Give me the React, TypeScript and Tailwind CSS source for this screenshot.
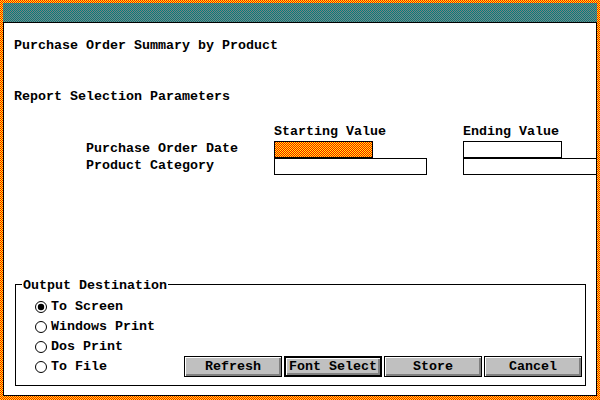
import React from "react";

// 1px checkerboards: 2px tiles of vertical halves blended over horizontal halves with "difference"
const checkerRed =
  "bg-[image:linear-gradient(90deg,#000000_50%,#00ff00_50%),linear-gradient(180deg,#ff0000_50%,#ffff00_50%)] bg-[length:2px_2px] bg-blend-difference";
const checkerTeal =
  "bg-[image:linear-gradient(90deg,#000000_50%,#800000_50%),linear-gradient(180deg,#008080_50%,#808080_50%)] bg-[length:2px_2px] bg-blend-difference";

function Radio({ label, checked }: { label: string; checked?: boolean }) {
  return (
    <div className="flex h-5 items-center gap-[4px]">
      <svg width="12" height="12" viewBox="0 0 12 12" className="shrink-0">
        <circle cx="6" cy="6" r="5.5" fill="#fff" stroke="#000" strokeWidth="1" />
        {checked && <circle cx="6" cy="6" r="3.2" fill="#000" />}
      </svg>
      <span>{label}</span>
    </div>
  );
}

function Button({ label, focused }: { label: string; focused?: boolean }) {
  return (
    <button
      className={`h-[21px] w-[98px] border border-black bg-[#c0c0c0] font-bold leading-[16px] ${
        focused
          ? "shadow-[inset_0_0_0_1px_#000000,inset_2px_2px_0_#ffffff,inset_-3px_-3px_0_#808080]"
          : "shadow-[inset_1px_1px_0_#ffffff,inset_-2px_-2px_0_#808080]"
      }`}
    >
      {label}
    </button>
  );
}

export default function App() {
  return (
    <div
      className={`flex h-[400px] w-[600px] flex-col p-[3px] pb-[4px] font-['Liberation_Mono',monospace] text-[13.34px] font-bold leading-[16px] text-black ${checkerRed}`}
    >
      {/* Title bar */}
      <div className={`h-[20px] shrink-0 border-b border-black ${checkerTeal}`} />

      {/* Body */}
      <div className="flex min-h-0 flex-1 flex-col overflow-hidden border-x border-b border-black bg-white">
        <div className="pl-[10px] pt-[15px]">Purchase Order Summary by Product</div>
        <div className="mt-[35px] pl-[10px]">Report Selection Parameters</div>

        {/* Selection grid */}
        <div className="mt-[19px] pl-[82px]">
          <div className="flex h-[17px]">
            <div className="w-[188px] shrink-0" />
            <div className="w-[189px] shrink-0">Starting Value</div>
            <div className="shrink-0">Ending Value</div>
          </div>
          <div className="flex h-[17px]">
            <div className="w-[188px] shrink-0">Purchase Order Date</div>
            <div className="w-[189px] shrink-0">
              <div className={`h-[17px] w-[99px] border border-black ${checkerRed}`} />
            </div>
            <div className="shrink-0">
              <div className="h-[17px] w-[99px] border border-black bg-white" />
            </div>
          </div>
          <div className="flex h-[17px]">
            <div className="w-[188px] shrink-0">Product Category</div>
            <div className="w-[189px] shrink-0">
              <div className="h-[17px] w-[153px] border border-black bg-white" />
            </div>
            <div className="shrink-0">
              <div className="h-[17px] w-[153px] border border-black bg-white" />
            </div>
          </div>
        </div>

        {/* Output destination */}
        <fieldset className="mb-[9px] ml-[11px] mr-[10px] mt-auto h-[112px] border border-black">
          <legend className="ml-[6px] px-[1px] pt-[4px]">Output Destination</legend>
          <div className="flex items-end justify-between pr-[3px] pt-[3px]">
            <div className="pl-[19px]">
              <Radio label="To Screen" checked />
              <Radio label="Windows Print" />
              <Radio label="Dos Print" />
              <Radio label="To File" />
            </div>
            <div className="flex gap-[2px]">
              <Button label="Refresh" />
              <Button label="Font Select" focused />
              <Button label="Store" />
              <Button label="Cancel" />
            </div>
          </div>
        </fieldset>
      </div>
    </div>
  );
}
